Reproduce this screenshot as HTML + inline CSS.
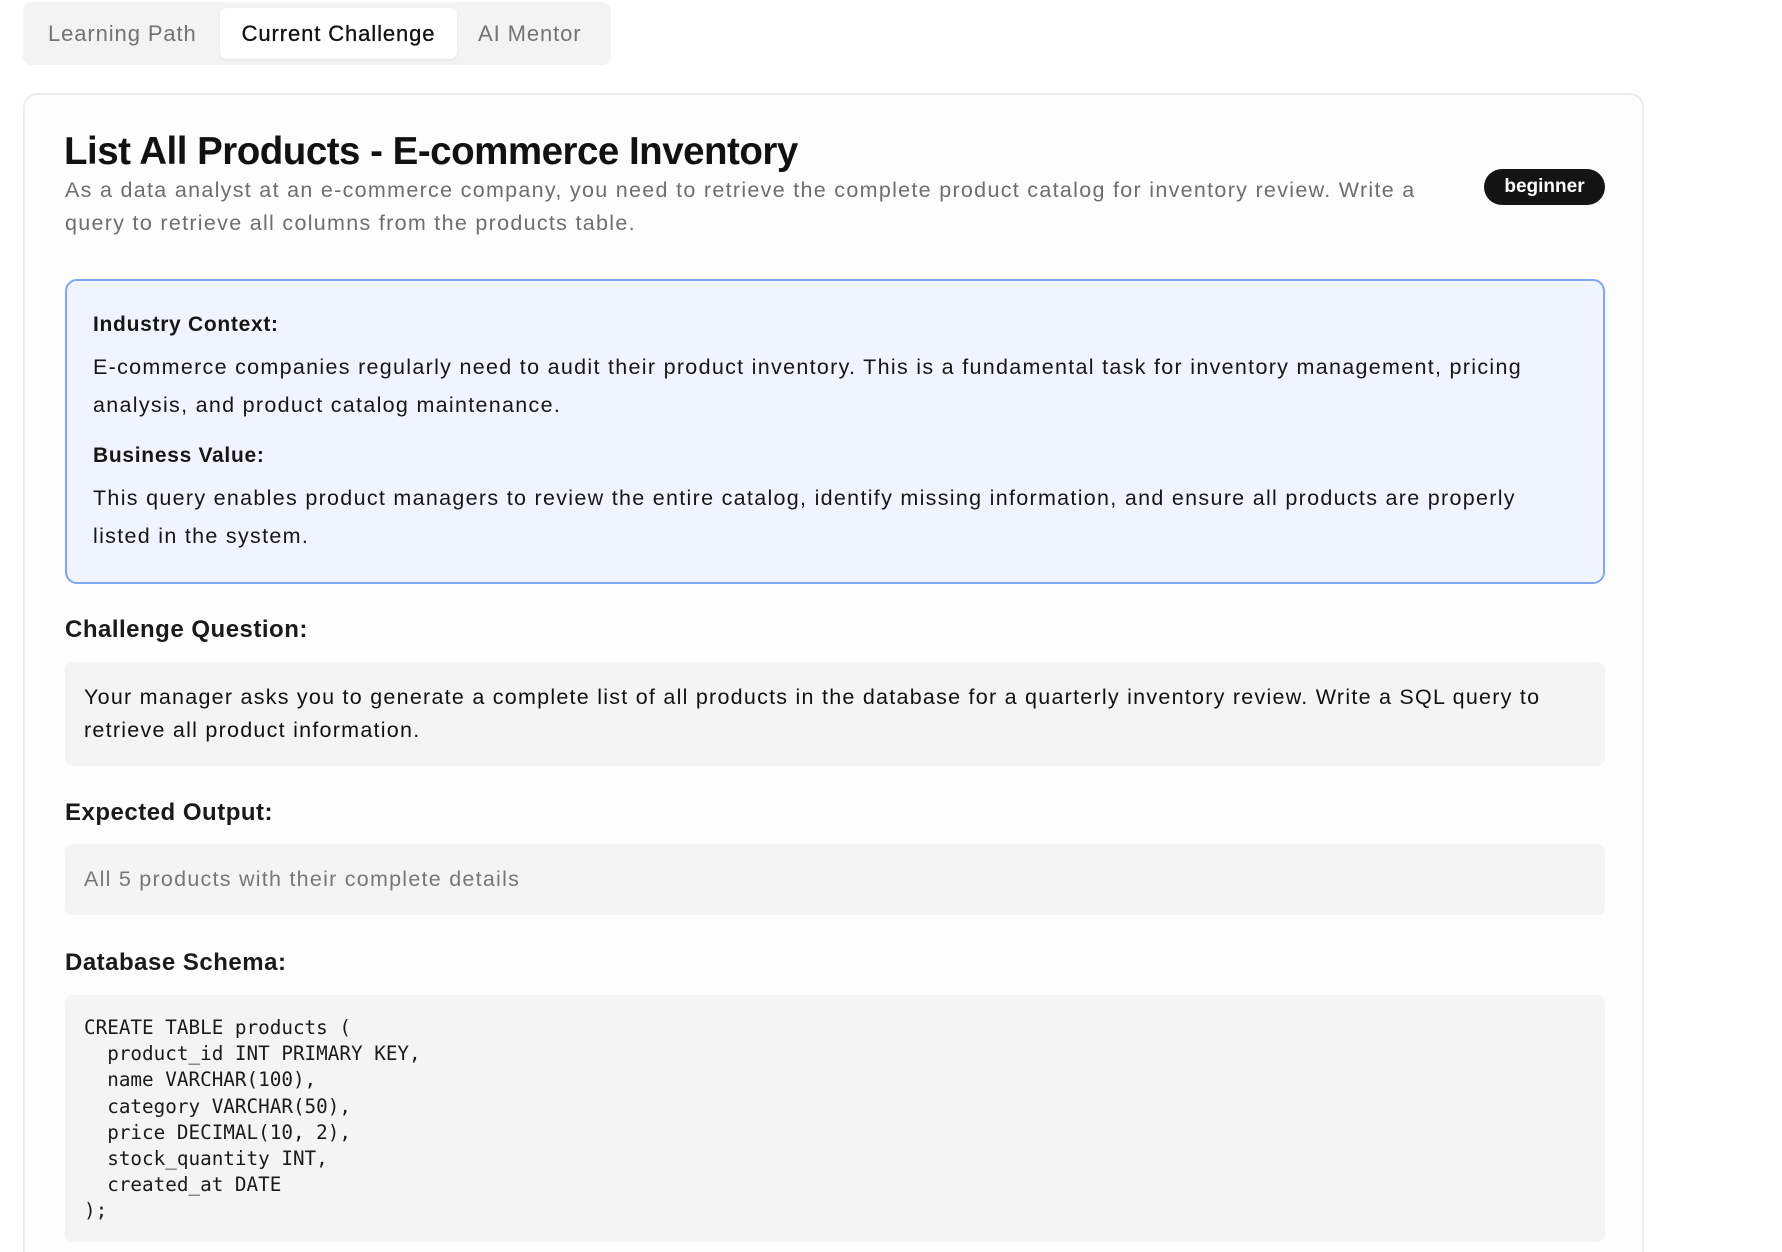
<!DOCTYPE html>
<html><head><meta charset="utf-8"><style>
*{box-sizing:border-box;margin:0;padding:0}
html,body{width:1782px;height:1252px;overflow:hidden;background:#fff;font-family:"Liberation Sans",sans-serif;color:#111}
#wrap{position:relative;width:1782px;height:1252px;overflow:hidden}
.tabs{position:absolute;left:23px;top:2px;width:588px;height:63px;background:#f3f3f3;border-radius:9px}
.tab{position:absolute;top:6px;height:51px;line-height:51px;font-size:22px;letter-spacing:0.9px;color:#737373;white-space:nowrap}
.tab.active{background:#fff;color:#111;border-radius:7px;box-shadow:0 1px 2px rgba(0,0,0,.08);-webkit-text-stroke:0.3px #111}
.card{position:absolute;left:23px;top:93px;width:1621px;height:1200px;border:2px solid #ececec;border-radius:14px;background:#fdfdfd}
h1{position:absolute;left:39px;top:35px;font-size:38.5px;font-weight:bold;letter-spacing:-0.5px;white-space:nowrap}
.desc{position:absolute;left:40px;top:79px;font-size:21.5px;letter-spacing:1.3px;line-height:33px;color:#6e6e6e;white-space:nowrap}
.badge{position:absolute;left:1459px;top:74px;width:121px;height:36px;border-radius:18px;background:#141414;color:#fff;font-weight:bold;font-size:19px;text-align:center;line-height:35px}
.blue{position:absolute;left:40px;top:184px;width:1540px;height:305px;background:#eff4fe;border:2px solid #7ea6f3;border-radius:12px}
.blue .h{position:absolute;left:26px;font-size:21px;letter-spacing:0.7px;font-weight:bold;color:#161616}
.blue .p{position:absolute;left:26px;font-size:21.5px;letter-spacing:1.3px;line-height:37.5px;color:#161616;white-space:nowrap}
.sh{position:absolute;left:40px;font-size:24px;font-weight:bold;color:#1a1a1a;letter-spacing:0.5px}
.gray{position:absolute;left:40px;width:1540px;background:#f4f4f4;border-radius:8px}
.gray .t{position:absolute;left:19px;font-size:21.5px;letter-spacing:1.25px;line-height:33px;white-space:nowrap}
pre{position:absolute;left:19px;top:20px;font-family:"DejaVu Sans Mono","Liberation Mono",monospace;font-size:19.3px;line-height:26.2px;color:#1a1a1a}
</style></head><body><div id="wrap">
<div class="tabs">
  <div class="tab" style="left:25px">Learning Path</div>
  <div class="tab active" style="left:197px;width:237px;text-align:center">Current Challenge</div>
  <div class="tab" style="left:455px">AI Mentor</div>
</div>
<div class="card">
  <h1>List All Products - E-commerce Inventory</h1>
  <div class="desc">As a data analyst at an e-commerce company, you need to retrieve the complete product catalog for inventory review. Write a<br>query to retrieve all columns from the products table.</div>
  <div class="badge">beginner</div>
  <div class="blue">
    <div class="h" style="top:32px">Industry Context:</div>
    <div class="p" style="top:68px">E-commerce companies regularly need to audit their product inventory. This is a fundamental task for inventory management, pricing<br>analysis, and product catalog maintenance.</div>
    <div class="h" style="top:163px">Business Value:</div>
    <div class="p" style="top:199px">This query enables product managers to review the entire catalog, identify missing information, and ensure all products are properly<br>listed in the system.</div>
  </div>
  <div class="sh" style="top:521px">Challenge Question:</div>
  <div class="gray" style="top:567px;height:104px">
    <div class="t" style="top:19px">Your manager asks you to generate a complete list of all products in the database for a quarterly inventory review. Write a SQL query to<br>retrieve all product information.</div>
  </div>
  <div class="sh" style="top:704px">Expected Output:</div>
  <div class="gray" style="top:749px;height:71px">
    <div class="t" style="top:19px;color:#777">All 5 products with their complete details</div>
  </div>
  <div class="sh" style="top:854px">Database Schema:</div>
  <div class="gray" style="top:900px;height:247px">
<pre>CREATE TABLE products (
  product_id INT PRIMARY KEY,
  name VARCHAR(100),
  category VARCHAR(50),
  price DECIMAL(10, 2),
  stock_quantity INT,
  created_at DATE
);</pre>
  </div>
</div>
</div></body></html>
